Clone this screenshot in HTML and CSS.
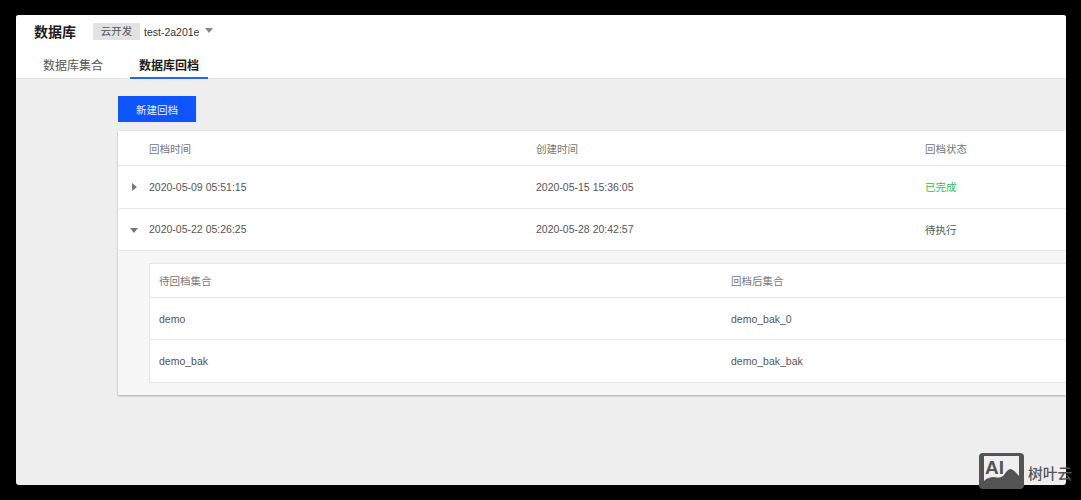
FILE: index.html
```html
<!DOCTYPE html>
<html lang="zh">
<head>
<meta charset="utf-8">
<title>数据库回档</title>
<link rel="stylesheet" href="styles.css">
</head>
<body>
<div class="window">
  <header class="top">
    <div class="title-row">
      <h1 class="title">数据库</h1>
      <span class="env-tag">云开发</span>
      <span class="env-name">test-2a201e</span>
      <svg class="env-caret" width="8" height="5" viewBox="0 0 8 5"><path d="M0 0h8L4 5z"/></svg>
    </div>
    <nav class="tabs">
      <a class="tab">数据库集合</a>
      <a class="tab tab-active">数据库回档</a>
    </nav>
  </header>
  <main class="content">
    <button class="primary">新建回档</button>
    <section class="card">
      <div class="row head">
        <div class="c1">回档时间</div>
        <div class="c2">创建时间</div>
        <div class="c3">回档状态</div>
      </div>
      <div class="row">
        <svg class="arrow" width="5" height="8" viewBox="0 0 5 8"><path d="M0 0l5 4-5 4z"/></svg>
        <div class="c1">2020-05-09 05:51:15</div>
        <div class="c2">2020-05-15 15:36:05</div>
        <div class="c3 done">已完成</div>
      </div>
      <div class="row">
        <svg class="arrow arrow-down" width="8" height="5" viewBox="0 0 8 5"><path d="M0 0h8L4 5z"/></svg>
        <div class="c1">2020-05-22 05:26:25</div>
        <div class="c2">2020-05-28 20:42:57</div>
        <div class="c3">待执行</div>
      </div>
      <div class="expand">
        <div class="inner">
          <div class="irow ihead"><div class="i1">待回档集合</div><div>回档后集合</div></div>
          <div class="irow"><div class="i1">demo</div><div>demo_bak_0</div></div>
          <div class="irow"><div class="i1">demo_bak</div><div>demo_bak_bak</div></div>
        </div>
      </div>
    </section>
  </main>
</div>
<div class="mark">
  <svg width="45" height="36" viewBox="0 0 45 36"><rect width="45" height="36" rx="4" fill="#545454"/><rect x="5" y="3" width="35" height="28" fill="#efefef"/><path d="M5 28c3-3 6-4 10-4 4 1 7 1 10-2 2-3 4-6 7-6 3 1 5 4 8 7v10H5z" fill="#545454"/><text x="6" y="21" class="mark-ai">AI</text></svg>
  <span class="mark-text">树叶云</span>
</div>
</body>
</html>
```
FILE: styles.css
```css
* { box-sizing: border-box; }
html, body { margin: 0; height: 100%; }
body {
  width: 1081px;
  height: 500px;
  background: #000;
  padding: 15px 15px 15px 16px;
  overflow: hidden;
  position: relative;
  font-family: "Liberation Sans", "Noto Sans CJK SC", sans-serif;
  font-size: 10.5px;
  color: #555;
}
.window {
  height: 470px;
  background: #eeeeee;
  border-radius: 3px;
  overflow: hidden;
  display: flex;
  flex-direction: column;
}
.top {
  height: 64px;
  flex: none;
  background: #fff;
  border-bottom: 1px solid #e3e3e3;
  display: flex;
  flex-direction: column;
}
.title-row {
  display: flex;
  align-items: center;
  height: 33px;
  flex: none;
  padding: 0 0 0 18px;
}
.title {
  margin: 0 0 2px;
  font-size: 14px;
  font-weight: 700;
  color: #1c1c1c;
  width: 59px;
}
.env-tag {
  background: #e2e2e2;
  width: 47px;
  height: 17px;
  line-height: 17px;
  text-align: center;
  color: #555;
}
.env-name { margin-left: 4px; color: #333; }
.env-caret { margin-left: 6px; margin-top: -3px; fill: #888; }
.tabs {
  display: flex;
  padding-left: 18px;
  flex: none;
  height: 31px;
}
.tab {
  padding: 8px 9px 0;
  font-size: 12px;
  line-height: 20px;
  color: #555;
  margin-right: 18px;
  height: 31px;
}
.tab-active {
  color: #1c1c1c;
  font-weight: 700;
  border-bottom: 2px solid #2a62f0;
}
.content {
  flex: 1;
  min-height: 0;
  padding: 17px 0 0 102px;
}
.primary {
  display: block;
  width: 78px;
  height: 26px;
  border: 0;
  padding: 0;
  background: #0d55ff;
  color: #e8efff;
  font: inherit;
}
.card {
  margin-top: 9px;
  background: #fff;
  box-shadow: 0 1px 2px rgba(0, 0, 0, .3);
}
.row {
  position: relative;
  display: flex;
  align-items: center;
  height: 42.5px;
  padding-left: 31px;
  border-bottom: 1px solid #e6e6e6;
}
.head { height: 35px; color: #777; }
.c1 { width: 387px; }
.c2 { width: 389px; }
.c3 { flex: 1; }
.done { color: #2fbf4c; }
.arrow { position: absolute; left: 14px; top: 17px; fill: #777; }
.arrow-down { left: 12px; top: 19px; }
.expand {
  background: #f7f7f7;
  padding: 12px 0 12px 31px;
}
.inner {
  background: #fff;
  border: 1px solid #e4e4e4;
  border-right: 0;
}
.irow {
  display: flex;
  align-items: center;
  height: 42px;
  padding-left: 9px;
  border-bottom: 1px solid #e6e6e6;
}
.irow:last-child { border-bottom: 0; }
.ihead { height: 34px; color: #777; }
.i1 { width: 572px; }
.mark {
  position: absolute;
  left: 979px;
  top: 453px;
  display: flex;
  align-items: center;
}
.mark-ai { font: 700 19px "Liberation Sans", sans-serif; fill: #545454; }
.mark-text {
  margin-left: 4px;
  margin-top: 2px;
  font-size: 14.7px;
  font-weight: 500;
  color: #555;
  white-space: nowrap;
}
```
